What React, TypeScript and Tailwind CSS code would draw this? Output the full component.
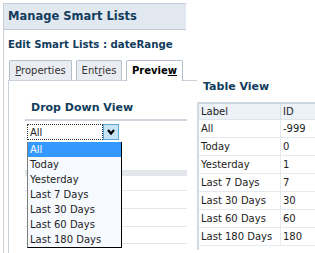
import React from "react";

const items = ["All", "Today", "Yesterday", "Last 7 Days", "Last 30 Days", "Last 60 Days", "Last 180 Days"];
const rows: [string, string][] = [
  ["All", "-999"],
  ["Today", "0"],
  ["Yesterday", "1"],
  ["Last 7 Days", "7"],
  ["Last 30 Days", "30"],
  ["Last 60 Days", "60"],
  ["Last 180 Days", "180"],
];

export default function App() {
  return (
    <div className="w-[315px] h-[253px] bg-white overflow-hidden flex font-['Tahoma','DejaVu_Sans',sans-serif] text-[10px] text-[#222]">
      {/* Left: Manage Smart Lists panel */}
      <div className="w-[197px] shrink-0 pl-[3px] pt-[3px] flex flex-col">
        <div className="flex-1 border-l border-[#c9d1da] flex flex-col">
          <div className="w-[182px] h-[27px] bg-[#e1e8ef] border-t border-b border-[#c3ccd6] flex items-center pl-[4px] font-bold text-[11.5px] text-[#123c5c]">
            Manage Smart Lists
          </div>
          <div className="h-[30px] flex items-center pl-[4px] font-bold text-[10.2px] text-[#123c5c]">
            Edit Smart Lists : dateRange
          </div>
          <div className="ml-[4px] flex-1 flex flex-col">
            {/* Tabs */}
            <div className="h-[20px] flex items-end pl-[1px] gap-[4px]">
              <div className="w-[63px] h-[20px] border border-b-0 border-[#b4bec8] rounded-t-[2px] bg-[#e9edf1] flex items-center justify-center text-[#333]">
                <span>
                  <span className="underline">P</span>roperties
                </span>
              </div>
              <div className="w-[46px] h-[20px] border border-b-0 border-[#b4bec8] rounded-t-[2px] bg-[#e9edf1] flex items-center justify-center text-[#333]">
                <span>
                  Ent<span className="underline">r</span>ies
                </span>
              </div>
              <div className="relative z-10 -mb-px w-[57px] h-[21px] border border-b-0 border-[#b4bec8] rounded-t-[2px] bg-white flex items-center justify-center font-bold text-black pb-[1px]">
                <span>
                  Previe<span className="underline">w</span>
                </span>
              </div>
            </div>
            {/* Tab content */}
            <div className="flex-1 border-l border-t border-[#c9d1da] flex flex-col">
              <div className="ml-[16px] w-[162px] mt-[20px] pb-[5px] border-b-2 border-[#cfd8e1] pl-[6px] leading-[13px] font-bold text-[11px] text-[#123c5c]">
                Drop Down View
              </div>
              <div className="relative ml-[18px] mt-[3px] h-[16px] flex w-[92px]">
                <div className="flex-1 border border-dotted border-[#333] flex items-center pl-[2px] bg-white">All</div>
                <div className="w-[16px] h-[16px] bg-[#c6e6f8] border border-[#5ea6d6] flex items-center justify-center">
                  <svg width="10" height="8" viewBox="0 0 10 8">
                    <path d="M2 2 L5 5.5 L8 2" stroke="#000" strokeWidth="2.2" fill="none" />
                  </svg>
                </div>
                {/* Open menu */}
                <div className="absolute left-0 top-[18px] z-20 w-[95px] bg-[#f6faff] border-l border-l-[#7d7d7d] border-r border-r-black border-b border-b-black flex flex-col">
                  {items.map((it, i) => (
                    <div
                      key={it}
                      className={
                        i === 0
                          ? "h-[15px] flex items-center pl-[2px] bg-[#3399ff] text-white"
                          : "h-[15px] flex items-center pl-[2px] text-[#222]"
                      }
                    >
                      {it}
                    </div>
                  ))}
                </div>
              </div>
              {/* Table behind the menu */}
              <div className="ml-[16px] w-[162px] mt-[30px] flex flex-col">
                <div className="h-[6px] bg-[#e3e7ec]" />
                <div className="h-[15px] border-b border-[#e3e7eb]" />
                <div className="h-[18px] border-b border-[#e3e7eb]" />
                <div className="h-[18px] border-b border-[#e3e7eb]" />
                <div className="h-[17px] border-b border-[#e3e7eb]" />
              </div>
            </div>
          </div>
        </div>
      </div>

      {/* Right: Table View */}
      <div className="flex-1 flex flex-col pt-[80px]">
        <div className="pl-[6px] leading-[14px] font-bold text-[11px] text-[#123c5c]">Table View</div>
        <div className="mt-[8px] border-l-2 border-[#d3dae2] pb-[4px] w-[140px]">
          <div className="border-t-2 border-[#cdd6df] h-[18px] bg-[#edf1f8] border-b border-b-[#dfe5eb] flex">
            <div className="w-[82px] border-r border-[#d6dde5] flex items-center pl-[2px]">Label</div>
            <div className="flex-1 flex items-center pl-[2px]">ID</div>
          </div>
          {rows.map(([l, id]) => (
            <div key={l} className="h-[18px] border-b border-[#e6eaef] flex">
              <div className="w-[82px] border-r border-[#e6eaef] flex items-center pl-[2px]">{l}</div>
              <div className="flex-1 flex items-center pl-[2px]">{id}</div>
            </div>
          ))}
        </div>
      </div>
    </div>
  );
}
